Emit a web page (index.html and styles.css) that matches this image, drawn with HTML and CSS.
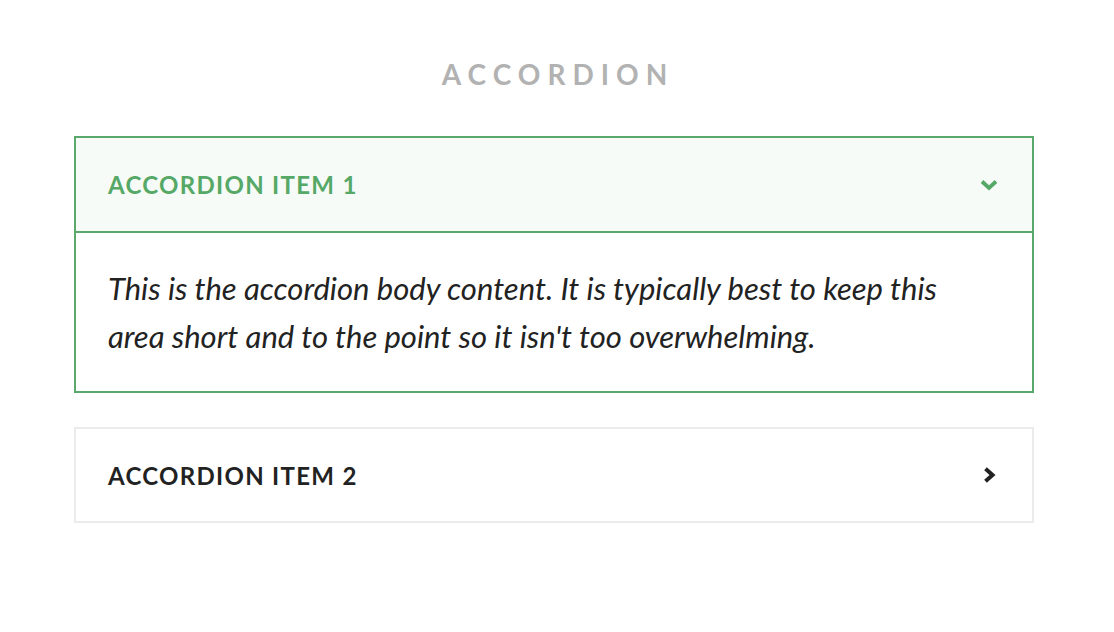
FILE: index.html
```html
<!DOCTYPE html>
<html>
<head>
<meta charset="utf-8">
<link rel="stylesheet" href="styles.css">
</head>
<body>
<main class="page">
  <h1 class="title">Accordion</h1>
  <section class="accordion">
    <div class="item item-open">
      <div class="header">
        <span class="label">Accordion Item 1</span>
        <svg class="chev" width="18" height="12" viewBox="0 0 18 12"><path d="M2 2.5 L9 9 L16 2.5" fill="none" stroke="currentColor" stroke-width="3.8" stroke-linejoin="miter"/></svg>
      </div>
      <div class="body">This is the accordion body content. It is typically best to keep this area short and to the point so it isn't too overwhelming.</div>
    </div>
    <div class="item">
      <div class="header">
        <span class="label">Accordion Item 2</span>
        <svg class="chev chev-right" width="13" height="16" viewBox="0 0 13 16"><path d="M2.5 1.8 L9.5 8 L2.5 14.2" fill="none" stroke="currentColor" stroke-width="4" stroke-linejoin="miter"/></svg>
      </div>
    </div>
  </section>
</main>
</body>
</html>
```
FILE: styles.css
```css
html, body {
  margin: 0;
  padding: 0;
  background: #ffffff;
}
body {
  font-family: Lato, "Liberation Sans", sans-serif;
  color: #222222;
}
.page {
  padding: 56px 80px 0 74px;
}
.title {
  margin: 0 0 44px 0;
  padding-left: 8px;
  text-align: center;
  font-size: 28px;
  line-height: 36px;
  font-weight: 700;
  letter-spacing: 7px;
  text-transform: uppercase;
  color: #b2b2b2;
}
.accordion {
  display: flex;
  flex-direction: column;
  gap: 34px;
}
.item {
  border: 2px solid #ebebeb;
  background: #ffffff;
}
.item-open {
  border-color: #5aa86b;
}
.header {
  height: 93px;
  display: flex;
  align-items: center;
  justify-content: space-between;
  padding: 0 34px 0 32px;
}
.item + .item .header {
  height: 92px;
}
.item-open .header {
  background: #f6fbf7;
  border-bottom: 2px solid #5aa86b;
  color: #55a866;
}
.label {
  font-size: 24px;
  font-weight: 700;
  letter-spacing: 1.3px;
  text-transform: uppercase;
}
.chev {
  display: block;
}
.chev-right {
  margin-right: 2px;
}
.body {
  padding: 31px 34px 31px 32px;
  font-size: 31px;
  line-height: 48px;
  font-style: italic;
  color: #222222;
}
```
